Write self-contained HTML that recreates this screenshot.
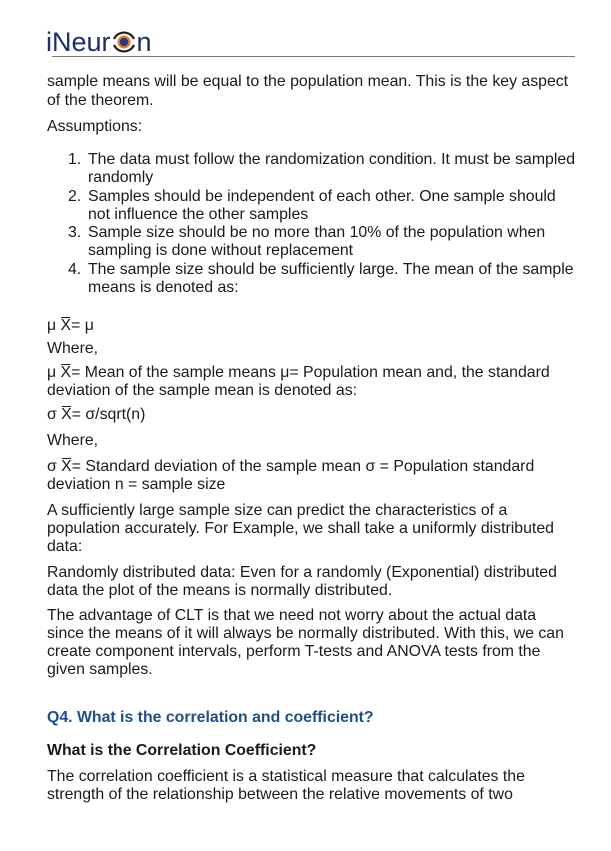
<!DOCTYPE html>
<html><head><meta charset="utf-8"><style>
body{margin:0;width:611px;height:851px;background:#fff;position:relative;overflow:hidden;font-family:"Liberation Sans",Arial,sans-serif;color:#1a1a1a}
.l{position:absolute;left:47px;font-size:15.85px;line-height:18px;white-space:nowrap;margin-top:1px}
.n{left:68px}
.t{left:88px}
.b{font-weight:bold}
.q{color:#1f4e8c}
</style></head><body>
<div style="position:absolute;left:46px;top:26px;font-size:27px;color:#1d2c6b;line-height:32px;display:flex;align-items:center">iNeur<svg style="margin:0 1px 0 1px" width="24" height="26" viewBox="0 0 24 26">
<path d="M2 10 A11 11 0 0 1 22 10" fill="none" stroke="#222" stroke-width="2.2"/>
<path d="M2 16 A11 11 0 0 0 22 16" fill="none" stroke="#222" stroke-width="2.2"/>
<circle cx="12" cy="13" r="6.5" fill="#e97a1e"/>
<circle cx="12" cy="13" r="4.2" fill="#1d3c8c"/>
</svg>n</div>
<div style="position:absolute;left:52px;top:56px;width:523px;height:1px;background:#777"></div>

<div class="l" style="top:72px">sample means will be equal to the population mean. This is the key aspect</div>
<div class="l" style="top:91px">of the theorem.</div>
<div class="l" style="top:117px">Assumptions:</div>
<div class="l n" style="top:150px">1.</div><div class="l t" style="top:150px">The data must follow the randomization condition. It must be sampled</div>
<div class="l t" style="top:168px">randomly</div>
<div class="l n" style="top:187px">2.</div><div class="l t" style="top:187px">Samples should be independent of each other. One sample should</div>
<div class="l t" style="top:205px">not influence the other samples</div>
<div class="l n" style="top:223px">3.</div><div class="l t" style="top:223px">Sample size should be no more than 10% of the population when</div>
<div class="l t" style="top:241px">sampling is done without replacement</div>
<div class="l n" style="top:260px">4.</div><div class="l t" style="top:260px">The sample size should be sufficiently large. The mean of the sample</div>
<div class="l t" style="top:278px">means is denoted as:</div>
<div class="l" style="top:316px">μ X̅= μ</div>
<div class="l" style="top:339px">Where,</div>
<div class="l" style="top:363px">μ X̅= Mean of the sample means μ= Population mean and, the standard</div>
<div class="l" style="top:381px">deviation of the sample mean is denoted as:</div>
<div class="l" style="top:405px">σ X̅= σ/sqrt(n)</div>
<div class="l" style="top:431px">Where,</div>
<div class="l" style="top:457px">σ X̅= Standard deviation of the sample mean σ = Population standard</div>
<div class="l" style="top:475px">deviation n = sample size</div>
<div class="l" style="top:501px">A sufficiently large sample size can predict the characteristics of a</div>
<div class="l" style="top:519px">population accurately. For Example, we shall take a uniformly distributed</div>
<div class="l" style="top:537px">data:</div>
<div class="l" style="top:563px">Randomly distributed data: Even for a randomly (Exponential) distributed</div>
<div class="l" style="top:581px">data the plot of the means is normally distributed.</div>
<div class="l" style="top:606px">The advantage of CLT is that we need not worry about the actual data</div>
<div class="l" style="top:624px">since the means of it will always be normally distributed. With this, we can</div>
<div class="l" style="top:642px">create component intervals, perform T-tests and ANOVA tests from the</div>
<div class="l" style="top:660px">given samples.</div>
<div class="l b q" style="top:708px">Q4. What is the correlation and coefficient?</div>
<div class="l b" style="top:741px">What is the Correlation Coefficient?</div>
<div class="l" style="top:767px">The correlation coefficient is a statistical measure that calculates the</div>
<div class="l" style="top:785px">strength of the relationship between the relative movements of two</div>
</body></html>
